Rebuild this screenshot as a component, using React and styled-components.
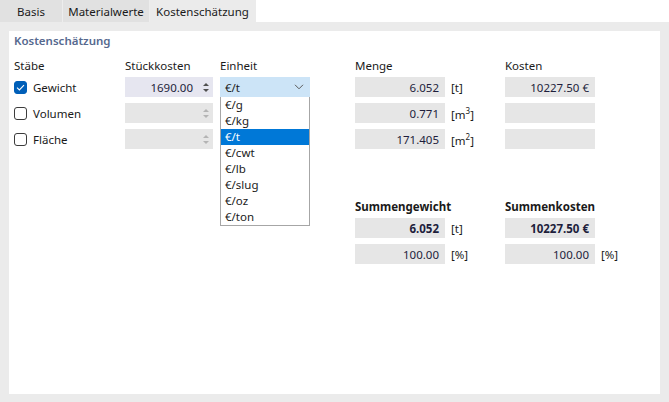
import React from 'react';
import styled, { createGlobalStyle } from 'styled-components';

const GlobalStyle = createGlobalStyle`
    body {
        margin: 0;
        background: #FFFFFF;
        font-family: "Noto Sans", "Open Sans", sans-serif;
        font-size: 11.5px;
        color: #1A1A1A;
    }
`;

// components
const Frame = styled.div`
    width: 669px;
    height: 402px;
    display: flex;
    flex-direction: column;
    background: #FFFFFF;
`;

const TabBar = styled.div`
    display: flex;
    height: 22px;
`;

const Tab = styled.div`
    width: ${p => p.$w}px;
    display: flex;
    align-items: center;
    justify-content: center;
    background: ${p => (p.$active ? '#EBEBEB' : '#E1E1E1')};
    border-right: 1px solid ${p => (p.$active ? 'transparent' : '#EDEDED')};
    color: #1A1A1A;
`;

const Body = styled.div`
    flex: 1;
    background: #EBEBEB;
    padding: 9px 9px 8px 9px;
    display: flex;
`;

const Panel = styled.div`
    flex: 1;
    background: #FFFFFF;
    padding: 2px 5px;
`;

const Title = styled.div`
    height: 16px;
    line-height: 16px;
    font-weight: 600;
    color: #56698F;
`;

const Line = styled.div`
    display: grid;
    grid-template-columns: 111px 95px 135px 150px 1fr;
    align-items: center;
    height: ${p => p.$h || 20}px;
    margin-top: ${p => p.$mt || 0}px;
`;

const Head = styled.div`
    grid-column: ${p => p.$col || 'auto'};
    font-weight: ${p => (p.$bold ? 700 : 400)};
    line-height: 16px;
`;

const CheckLabel = styled.label`
    display: flex;
    align-items: center;
    gap: 6px;
`;

const Box = styled.span`
    width: 13px;
    height: 13px;
    box-sizing: border-box;
    border-radius: 3px;
    border: 1px solid ${p => (p.$checked ? '#005FB8' : '#3C3C3C')};
    background: ${p => (p.$checked ? '#005FB8' : '#FFFFFF')};
    display: flex;
    align-items: center;
    justify-content: center;
`;

const Spin = styled.div`
    width: 88px;
    height: 20px;
    display: flex;
    align-items: center;
    background: ${p => (p.$disabled ? '#E6E6E6' : '#E6E6F0')};
    color: #1E1E3C;
`;

const SpinValue = styled.span`
    flex: 1;
    text-align: right;
    padding-right: 6px;
`;

const SpinArrows = styled.div`
    width: 14px;
    display: flex;
    flex-direction: column;
    align-items: center;
    gap: 3px;
`;

const Arrow = styled.span`
    width: 0;
    height: 0;
    border-left: 3px solid transparent;
    border-right: 3px solid transparent;
    ${p => (p.$down ? 'border-top' : 'border-bottom')}: 3px solid ${p => (p.$disabled ? '#B4B4B4' : '#505050')};
`;

const Select = styled.div`
    position: relative;
    width: 90px;
    height: 20px;
    box-sizing: border-box;
    display: flex;
    align-items: center;
    justify-content: space-between;
    padding: 0 6px 0 5px;
    background: #CCE4F7;
`;

const List = styled.div`
    position: absolute;
    top: 20px;
    left: 0;
    width: 90px;
    box-sizing: border-box;
    border: 1px solid #A6A6A6;
    border-top: none;
    background: #FFFFFF;
    z-index: 2;
`;

const Option = styled.div`
    height: 16px;
    line-height: 16px;
    padding-left: 4px;
    background: ${p => (p.$selected ? '#0078D7' : 'transparent')};
    color: ${p => (p.$selected ? '#FFFFFF' : '#1A1A1A')};
`;

const Cell = styled.div`
    display: flex;
    align-items: center;
    gap: 6px;
    grid-column: ${p => p.$col || 'auto'};
`;

const Field = styled.div`
    width: 90px;
    height: 20px;
    box-sizing: border-box;
    padding-right: 6px;
    display: flex;
    align-items: center;
    justify-content: flex-end;
    background: #E6E6E6;
    color: #1E1E3C;
    font-weight: ${p => (p.$bold ? 700 : 400)};
`;

const Unit = styled.span`
    color: #1A1A1A;
    sup {
        font-size: 8px;
    }
`;

const units = ['€/g', '€/kg', '€/t', '€/cwt', '€/lb', '€/slug', '€/oz', '€/ton'];

function Check({ checked, children }) {
    return (
        <CheckLabel>
            <Box $checked={checked}>
                {checked && (
                    <svg width="9" height="7" viewBox="0 0 9 7">
                        <path d="M1 3.6 L3.4 6 L8 1.2" fill="none" stroke="#FFFFFF" strokeWidth="1.1" />
                    </svg>
                )}
            </Box>
            {children}
        </CheckLabel>
    );
}

function SpinBox({ value, disabled }) {
    return (
        <Spin $disabled={disabled}>
            <SpinValue>{value}</SpinValue>
            <SpinArrows>
                <Arrow $disabled={disabled} />
                <Arrow $down $disabled={disabled} />
            </SpinArrows>
        </Spin>
    );
}

function App() {
    return (
        <Frame>
            <GlobalStyle />
            <TabBar>
                <Tab $w={62}>Basis</Tab>
                <Tab $w={86}>Materialwerte</Tab>
                <Tab $w={105} $active>Kostenschätzung</Tab>
            </TabBar>
            <Body>
                <Panel>
                    <Title>Kostenschätzung</Title>
                    <Line $h={16} $mt={9}>
                        <Head>Stäbe</Head>
                        <Head>Stückkosten</Head>
                        <Head>Einheit</Head>
                        <Head>Menge</Head>
                        <Head>Kosten</Head>
                    </Line>
                    <Line $mt={3}>
                        <Check checked>Gewicht</Check>
                        <SpinBox value="1690.00" />
                        <div>
                            <Select>
                                <span>€/t</span>
                                <svg width="10" height="6" viewBox="0 0 10 6">
                                    <path d="M1 0.8 L5 4.8 L9 0.8" fill="none" stroke="#5A5A5A" strokeWidth="1" />
                                </svg>
                                <List>
                                    {units.map(u => (
                                        <Option key={u} $selected={u === '€/t'}>{u}</Option>
                                    ))}
                                </List>
                            </Select>
                        </div>
                        <Cell>
                            <Field>6.052</Field>
                            <Unit>[t]</Unit>
                        </Cell>
                        <Cell>
                            <Field>10227.50 €</Field>
                        </Cell>
                    </Line>
                    <Line $mt={6}>
                        <Check>Volumen</Check>
                        <SpinBox disabled />
                        <div />
                        <Cell>
                            <Field>0.771</Field>
                            <Unit>[m<sup>3</sup>]</Unit>
                        </Cell>
                        <Cell>
                            <Field />
                        </Cell>
                    </Line>
                    <Line $mt={6}>
                        <Check>Fläche</Check>
                        <SpinBox disabled />
                        <div />
                        <Cell>
                            <Field>171.405</Field>
                            <Unit>[m<sup>2</sup>]</Unit>
                        </Cell>
                        <Cell>
                            <Field />
                        </Cell>
                    </Line>
                    <Line $h={16} $mt={50}>
                        <Head $col={4} $bold>Summengewicht</Head>
                        <Head $bold>Summenkosten</Head>
                    </Line>
                    <Line $mt={3}>
                        <Cell $col={4}>
                            <Field $bold>6.052</Field>
                            <Unit>[t]</Unit>
                        </Cell>
                        <Cell>
                            <Field $bold>10227.50 €</Field>
                        </Cell>
                    </Line>
                    <Line $mt={6}>
                        <Cell $col={4}>
                            <Field>100.00</Field>
                            <Unit>[%]</Unit>
                        </Cell>
                        <Cell>
                            <Field>100.00</Field>
                            <Unit>[%]</Unit>
                        </Cell>
                    </Line>
                </Panel>
            </Body>
        </Frame>
    );
}

export default App;
